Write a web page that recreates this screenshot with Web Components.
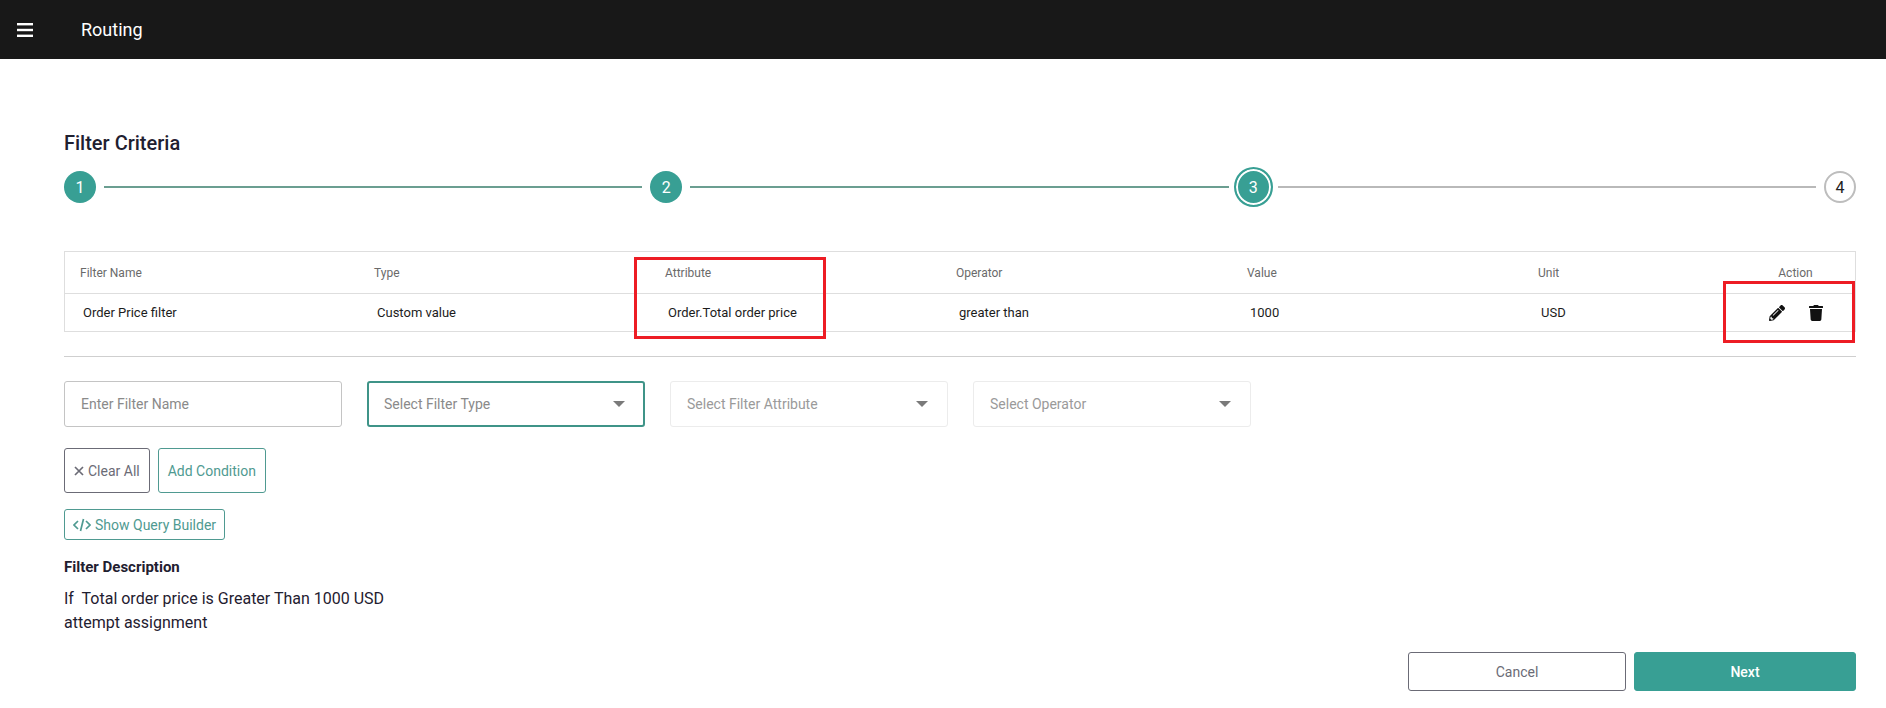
<!DOCTYPE html>
<html>
<head>
<meta charset="utf-8">
<title>Routing</title>
<style>
  html, body { margin: 0; background: #fff; }
  body { font-family: Roboto, "Liberation Sans", sans-serif; color: #1f2030; overflow: hidden; }
</style>
</head>
<body>
<app-header title="Routing"></app-header>
<filter-page></filter-page>

<script>
class AppHeader extends HTMLElement {
  constructor() {
    super();
    const shadowRoot = this.attachShadow({ mode: 'open' });
    shadowRoot.innerHTML = `
      <style>
      :host {
        display: flex;
        align-items: center;
        height: 59px;
        background: #181818;
        color: #fff;
      }
      svg { margin-left: 17px; width: 16px; height: 14px; }
      span { margin-left: 48px; font-size: 18px; font-weight: 400; }
      </style>
      <svg viewBox="0 0 16 14" fill="#fff">
        <rect y="0" width="16" height="2.4"/>
        <rect y="5.8" width="16" height="2.4"/>
        <rect y="11.6" width="16" height="2.4"/>
      </svg>
      <span>${this.getAttribute('title')}</span>
    `;
  }
}
customElements.define('app-header', AppHeader);

class StepNode extends HTMLElement {
  constructor() {
    super();
    const shadowRoot = this.attachShadow({ mode: 'open' });
    shadowRoot.innerHTML = `
      <style>
      :host {
        display: flex;
        align-items: center;
        justify-content: center;
        box-sizing: border-box;
        flex: none;
        width: 32px;
        height: 32px;
        border-radius: 50%;
        font-size: 16px;
        background: #389f94;
        color: #fff;
      }
      :host([state="current"]) {
        width: 39px;
        height: 40px;
        background: #389f94;
        border: 2px solid #389f94;
        box-shadow: inset 0 0 0 2px #fff;
      }
      :host([state="todo"]) {
        background: #fff;
        color: #222;
        border: 2px solid #bdbdbd;
      }
      </style>
      <slot></slot>
    `;
  }
}
customElements.define('step-node', StepNode);

class StepLine extends HTMLElement {
  constructor() {
    super();
    const shadowRoot = this.attachShadow({ mode: 'open' });
    shadowRoot.innerHTML = `
      <style>
      :host {
        display: block;
        flex: 1;
        height: 2px;
        background: #6b9e91;
      }
      :host([state="todo"]) { background: #b9b9b9; }
      </style>
    `;
  }
}
customElements.define('step-line', StepLine);

class FilterStepper extends HTMLElement {
  constructor() {
    super();
    const shadowRoot = this.attachShadow({ mode: 'open' });
    shadowRoot.innerHTML = `
      <style>
      :host {
        display: flex;
        align-items: center;
        height: 40px;
        margin-top: 12px;
      }
      step-line { margin: 0 8px; }
      step-line.before { margin-right: 5px; }
      step-line.after { margin-left: 5px; }
      </style>
      <step-node>1</step-node>
      <step-line></step-line>
      <step-node>2</step-node>
      <step-line class="before"></step-line>
      <step-node state="current">3</step-node>
      <step-line class="after" state="todo"></step-line>
      <step-node state="todo">4</step-node>
    `;
  }
}
customElements.define('filter-stepper', FilterStepper);

class FilterTable extends HTMLElement {
  constructor() {
    super();
    const heads = ['Filter Name', 'Type', 'Attribute', 'Operator', 'Value', 'Unit'];
    const cells = ['Order Price filter', 'Custom value', 'Order.Total order price', 'greater than', '1000', 'USD'];
    const shadowRoot = this.attachShadow({ mode: 'open' });
    shadowRoot.innerHTML = `
      <style>
      :host {
        display: grid;
        grid-template-columns: 294px 291px 291px 291px 291px 213px 1fr;
        grid-template-rows: 42px 37px;
        margin-top: 44px;
        border: 1px solid #dedede;
        border-right-width: 1px;
      }
      div { display: flex; align-items: center; }
      .h { padding-left: 15px; font-size: 12px; color: #6a6a6a; border-bottom: 1px solid #dedede; }
      .c { padding-left: 18px; font-size: 13px; color: #1c1c1c; }
      .act { justify-content: center; padding: 0; }
      .icons { gap: 24px; }
      svg { height: 16px; fill: #111; display: block; }
      </style>
      ${heads.map(h => `<div class="h">${h}</div>`).join('')}
      <div class="h act">Action</div>
      ${cells.map(c => `<div class="c">${c}</div>`).join('')}
      <div class="c act icons">
        <svg width="16" viewBox="0 0 512 512"><path d="M497.9 142.1l-46.1 46.1c-4.7 4.7-12.3 4.7-17 0l-111-111c-4.7-4.7-4.7-12.3 0-17l46.1-46.1c18.7-18.7 49.1-18.7 67.9 0l60.1 60.1c18.8 18.7 18.8 49.1 0 67.9zM284.2 99.8L21.6 362.4.4 483.9c-2.9 16.4 11.4 30.6 27.8 27.8l121.5-21.3 262.6-262.6c4.7-4.7 4.7-12.3 0-17l-111-111c-4.8-4.7-12.4-4.7-17.1 0zM124.1 339.9c-5.5-5.5-5.5-14.3 0-19.8l154-154c5.5-5.5 14.3-5.5 19.8 0s5.5 14.3 0 19.8l-154 154c-5.5 5.5-14.3 5.5-19.8 0zM88 424h48v36.3l-64.5 11.3-31.1-31.1L51.7 376H88v48z"/></svg>
        <svg width="14" viewBox="0 0 448 512"><path d="M432 32H312l-9.4-18.7A24 24 0 0 0 281.1 0H166.8a23.72 23.72 0 0 0-21.4 13.3L136 32H16A16 16 0 0 0 0 48v32a16 16 0 0 0 16 16h416a16 16 0 0 0 16-16V48a16 16 0 0 0-16-16zM53.2 467a48 48 0 0 0 47.9 45h245.8a48 48 0 0 0 47.9-45L416 128H32z"/></svg>
      </div>
    `;
  }
}
customElements.define('filter-table', FilterTable);

class FilterField extends HTMLElement {
  constructor() {
    super();
    const arrow = this.hasAttribute('select') ? '<i></i>' : '';
    const shadowRoot = this.attachShadow({ mode: 'open' });
    shadowRoot.innerHTML = `
      <style>
      :host {
        display: flex;
        align-items: center;
        justify-content: space-between;
        box-sizing: border-box;
        width: 278px;
        height: 46px;
        padding: 0 19px 0 16px;
        font-size: 14px;
        color: #8a8a8a;
        border: 1px solid #c4c4c4;
        border-radius: 3px;
      }
      :host([active]) { border: 2px solid #3f9488; padding-left: 15px; padding-right: 18px; }
      :host([disabled]) { border-color: #ececec; color: #9a9a9a; }
      i {
        width: 0;
        height: 0;
        border-left: 6px solid transparent;
        border-right: 6px solid transparent;
        border-top: 6px solid #7a7a7a;
      }
      </style>
      <span><slot></slot></span>${arrow}
    `;
  }
}
customElements.define('filter-field', FilterField);

class AppButton extends HTMLElement {
  constructor() {
    super();
    const shadowRoot = this.attachShadow({ mode: 'open' });
    shadowRoot.innerHTML = `
      <style>
      :host {
        display: inline-flex;
        align-items: center;
        justify-content: center;
        box-sizing: border-box;
        gap: 4px;
        height: 45px;
        padding: 0 9px;
        font-size: 14px;
        color: #4f9a91;
        border: 1px solid #4f9a91;
        border-radius: 3px;
        background: #fff;
      }
      :host([kind="plain"]) { color: #6b6b76; border-color: #6b6b76; }
      :host([kind="solid"]) { color: #fff; background: #389f94; border-color: #389f94; font-weight: 500; }
      ::slotted(svg) { display: block; flex: none; }
      </style>
      <slot></slot>
    `;
  }
}
customElements.define('app-button', AppButton);

class NoteBox extends HTMLElement {
  constructor() {
    super();
    const shadowRoot = this.attachShadow({ mode: 'open' });
    shadowRoot.innerHTML = `
      <style>
      :host {
        position: absolute;
        box-sizing: border-box;
        border: 3.5px solid #ed1c24;
      }
      </style>
    `;
  }
}
customElements.define('note-box', NoteBox);

class FilterPage extends HTMLElement {
  constructor() {
    super();
    const shadowRoot = this.attachShadow({ mode: 'open' });
    shadowRoot.innerHTML = `
      <style>
      :host {
        display: block;
        position: relative;
        padding: 72px 30px 0 64px;
      }
      h2 { margin: 0; font-size: 20px; line-height: 24px; font-weight: 500; color: #1f2030; }
      hr { margin: 24px 0 0; border: 0; height: 1px; background: #cfcfcf; }
      .fields { display: flex; gap: 25px; margin-top: 24px; }
      .btns { display: flex; gap: 8px; margin-top: 21px; }
      .query { display: flex; margin-top: 16px; }
      .query app-button { height: 31px; padding: 0 8px; }
      h3 { margin: 17px 0 0; font-size: 15px; line-height: 20px; font-weight: 700; color: #1f2030; }
      p { margin: 10px 0 0; font-size: 16px; line-height: 24px; }
      .foot { display: flex; justify-content: flex-end; gap: 8px; margin-top: 17px; }
      .foot app-button { height: 39px; }
      .cancel { width: 218px; }
      .next { width: 222px; }
      note-box.attr { left: 634px; top: 198px; width: 192px; height: 82px; }
      note-box.acts { left: 1723px; top: 222px; width: 132px; height: 62px; }
      </style>
      <h2>Filter Criteria</h2>
      <filter-stepper></filter-stepper>
      <filter-table></filter-table>
      <hr>
      <div class="fields">
        <filter-field>Enter Filter Name</filter-field>
        <filter-field select active>Select Filter Type</filter-field>
        <filter-field select disabled>Select Filter Attribute</filter-field>
        <filter-field select disabled>Select Operator</filter-field>
      </div>
      <div class="btns">
        <app-button kind="plain">
          <svg width="10" height="10" viewBox="0 0 10 10" fill="none" stroke="#6b6b76" stroke-width="1.7"><path d="M1 1l8 8M9 1L1 9"/></svg>Clear All
        </app-button>
        <app-button>Add Condition</app-button>
      </div>
      <div class="query">
        <app-button>
          <svg width="18" height="14" viewBox="0 0 18 14" fill="none" stroke="#4f9a91" stroke-width="1.7"><path d="M5 3L1 7l4 4M13 3l4 4-4 4M10.5 1L7.5 13"/></svg>Show Query Builder
        </app-button>
      </div>
      <h3>Filter Description</h3>
      <p>If&nbsp; Total order price is Greater Than 1000 USD<br>attempt assignment</p>
      <div class="foot">
        <app-button kind="plain" class="cancel">Cancel</app-button>
        <app-button kind="solid" class="next">Next</app-button>
      </div>
      <note-box class="attr"></note-box>
      <note-box class="acts"></note-box>
    `;
  }
}
customElements.define('filter-page', FilterPage);
</script>
</body>
</html>
